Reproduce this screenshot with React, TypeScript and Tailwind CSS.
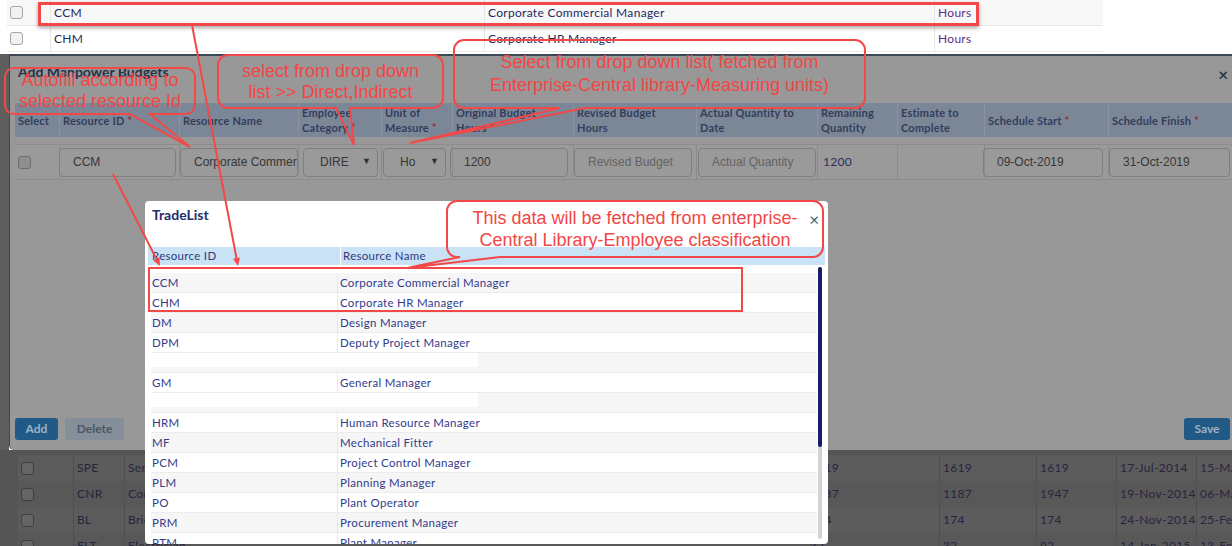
import React from 'react'

const RED = '#f34848'

const tradeRows: ([string, string] | null)[] = [
  ['CCM', 'Corporate Commercial Manager'],
  ['CHM', 'Corporate HR Manager'],
  ['DM', 'Design Manager'],
  ['DPM', 'Deputy Project Manager'],
  null,
  ['GM', 'General Manager'],
  null,
  ['HRM', 'Human Resource Manager'],
  ['MF', 'Mechanical Fitter'],
  ['PCM', 'Project Control Manager'],
  ['PLM', 'Planning Manager'],
  ['PO', 'Plant Operator'],
  ['PRM', 'Procurement Manager'],
  ['PTM', 'Plant Manager'],
]

const pageRows = [
  ['SPE', 'Senior Project Engineer', '1619', '1619', '1619', '17-Jul-2014', '15-Mar-2015'],
  ['CNR', 'Construction Manager', '1187', '1187', '1947', '19-Nov-2014', '06-Mar-2015'],
  ['BL', 'Bricklayer', '174', '174', '174', '24-Nov-2014', '25-Feb-2015'],
  ['ELT', 'Electrician', '32', '32', '92', '14-Jan-2015', '13-Feb-2015'],
]

// callout outline with a tail hanging from the bottom edge
function callout(x: number, y: number, w: number, h: number, r: number, b1: number, b2: number, tx: number, ty: number) {
  const R = x + w
  const B = y + h
  return `M${x + r},${y} H${R - r} A${r},${r} 0 0 1 ${R},${y + r} V${B - r} A${r},${r} 0 0 1 ${R - r},${B} H${b2} L${tx},${ty} L${b1},${B} H${x + r} A${r},${r} 0 0 1 ${x},${B - r} V${y + r} A${r},${r} 0 0 1 ${x + r},${y} Z`
}

function Arrow({ x1, y1, x2, y2 }: { x1: number; y1: number; x2: number; y2: number }) {
  const dx = x2 - x1
  const dy = y2 - y1
  const len = Math.hypot(dx, dy)
  const ux = dx / len
  const uy = dy / len
  const bx = x2 - ux * 8
  const by = y2 - uy * 8
  const pts = `${x2},${y2} ${bx - uy * 3.5},${by + ux * 3.5} ${bx + uy * 3.5},${by - ux * 3.5}`
  return (
    <g>
      <line x1={x1} y1={y1} x2={bx} y2={by} stroke={RED} strokeWidth={2} />
      <polygon points={pts} fill={RED} />
    </g>
  )
}

function Field({ text, w, ml, pl = 13, muted, caret }: { text: string; w: number; ml: number; pl?: number; muted?: boolean; caret?: boolean }) {
  return (
    <div
      className="h-[29px] border border-[#7f7f7f] rounded-[4px] flex items-center overflow-hidden whitespace-nowrap font-['Liberation_Sans',Arial,sans-serif] text-[12px]"
      style={{ width: w, marginLeft: ml, paddingLeft: pl }}
    >
      <span className={muted ? 'text-[#636363]' : 'text-[#363636]'}>{text}</span>
      {caret && <span className="ml-auto mr-[6px] text-[9px] text-[#2f2f2f]">▼</span>}
    </div>
  )
}

export default function App() {
  const heads: React.ReactNode[] = [
    'Select',
    <>Resource ID <span className="text-[#8a3535]">*</span></>,
    'Resource Name',
    <>Employee<br />Category <span className="text-[#8a3535]">*</span></>,
    <>Unit of<br />Measure <span className="text-[#8a3535]">*</span></>,
    <>Original Budget<br />Hours <span className="text-[#8a3535]">*</span></>,
    <>Revised Budget<br />Hours</>,
    <>Actual Quantity to<br />Date</>,
    <>Remaining<br />Quantity</>,
    <>Estimate to<br />Complete</>,
    <>Schedule Start <span className="text-[#8a3535]">*</span></>,
    <>Schedule Finish <span className="text-[#8a3535]">*</span></>,
  ]
  const cols = 'grid-cols-[44px_120px_119px_83px_71px_121px_123px_121px_80px_87px_124px_124px]'

  return (
    <div className="relative w-[1232px] h-[546px] overflow-hidden bg-white font-['Lato','Open_Sans',sans-serif]">
      {/* page rows above the modal */}
      <div className="h-[54px] pl-[7px]">
        {[['CCM', 'Corporate Commercial Manager'], ['CHM', 'Corporate HR Manager']].map(([id, name], i) => (
          <div key={id} className={`w-[1096px] h-[26px] flex items-center border-b border-[#e8e8e8] text-[12px] tracking-[0.3px] ${i === 0 ? 'bg-[#f8f8f8]' : 'bg-white'}`}>
            <div className="w-[44px] h-full flex items-center pl-[3px] border-r border-[#e6e6e6]">
              <div className="w-[13px] h-[13px] rounded-[3px] border border-[#a8a8a8] bg-[#f1f1f1]" />
            </div>
            <div className="w-[433px] pl-[3px] text-[#25285e]">{id}</div>
            <div className="w-[450px] h-full flex items-center pl-[3px] border-l border-[#e6e6e6] text-[#25285e]">{name}</div>
            <div className="flex-1 h-full flex items-center pl-[3px] border-l border-[#e6e6e6] text-[#5e2d86]">Hours</div>
          </div>
        ))}
      </div>

      {/* modal region */}
      <div className="flex h-[396px]">
        <div className="w-[9px] bg-[#5e5e5e]" />
        <div className="flex-1 flex flex-col bg-[#989898] border-t-2 border-l border-[#3b4856] rounded-bl-[5px]">
          <div className="flex items-start justify-between pl-[8px] pr-[4px] mt-[8px] h-[16px]">
            <div className="text-[14px] font-bold leading-[16px] text-[#26334a]">Add Manpower Budgets</div>
            <div className="mt-[4px] text-[17px] leading-[14px] font-bold text-[#2b3a4a]">×</div>
          </div>

          <div className="ml-[5px] mt-[23px]">
            <div className={`grid ${cols} h-[34px] bg-[#7b8797] text-[11px] font-bold leading-[15px] text-[#323d5c] tracking-[0.2px]`}>
              {heads.map((h, i) => (
                <div key={i} className={`flex items-center pl-[3px] whitespace-nowrap ${i > 0 ? 'border-l border-[#8a95a3]' : ''}`}>
                  <div>{h}</div>
                </div>
              ))}
            </div>

            <div className={`grid ${cols} h-[36px] mt-[7px] border-t border-b border-[#8c8c8c] bg-[#9a9a9a]`}>
              <div className="flex items-center pl-[3px]">
                <div className="w-[13px] h-[13px] rounded-[3px] border border-[#6c6c6c] bg-[#8f8f8f]" />
              </div>
              <div className="flex items-center border-l border-[#8c8c8c]"><Field text="CCM" w={117} ml={-1} /></div>
              <div className="flex items-center border-l border-[#8c8c8c]"><Field text="Corporate Commercial Manager" w={118} ml={0} /></div>
              <div className="flex items-center border-l border-[#8c8c8c]"><Field text="DIRE" w={75} ml={4} pl={16} caret /></div>
              <div className="flex items-center border-l border-[#8c8c8c]"><Field text="Ho" w={63} ml={1} pl={16} caret /></div>
              <div className="flex items-center border-l border-[#8c8c8c]"><Field text="1200" w={118} ml={-3} /></div>
              <div className="flex items-center border-l border-[#8c8c8c]"><Field text="Revised Budget" w={118} ml={0} muted /></div>
              <div className="flex items-center border-l border-[#8c8c8c]"><Field text="Actual Quantity" w={118} ml={1} muted /></div>
              <div className="flex items-center border-l border-[#8c8c8c] pl-[5px] text-[12px] text-[#2a3160] tracking-[0.3px]">1200</div>
              <div className="border-l border-[#8c8c8c]" />
              <div className="flex items-center border-l border-[#8c8c8c]"><Field text="09-Oct-2019" w={120} ml={-2} /></div>
              <div className="flex items-center border-l border-[#8c8c8c]"><Field text="31-Oct-2019" w={121} ml={0} /></div>
            </div>
          </div>

          <div className="mt-auto mb-[10px] flex items-center pl-[5px] pr-[2px]">
            <div className="h-[22px] w-[43px] rounded-[3px] bg-[#215a86] flex items-center justify-center text-[12px] font-bold text-[#9eb2c5]">Add</div>
            <div className="ml-[7px] h-[22px] w-[59px] rounded-[3px] bg-[#858f9a] flex items-center justify-center text-[12px] font-bold text-[#4c5663]">Delete</div>
            <div className="ml-auto h-[22px] w-[46px] rounded-[3px] bg-[#215a86] flex items-center justify-center text-[12px] font-bold text-[#9eb2c5]">Save</div>
          </div>
        </div>
      </div>

      {/* page rows below the modal */}
      <div className="h-[96px] bg-[#555555] pt-[5px]">
        {pageRows.map((r, i) => (
          <div key={r[0]} className={`h-[26px] ml-[18px] flex items-center text-[12px] tracking-[0.3px] ${i % 2 === 0 ? 'bg-[#5c5c5c]' : 'bg-[#585858]'}`}>
            <div className="w-[55px] h-full flex items-center pl-[3px]">
              <div className="w-[13px] h-[13px] rounded-[3px] border border-[#3f3f3f] bg-[#656565]" />
            </div>
            <div className="w-[51px] h-full flex items-center pl-[3px] border-l border-[#4f4f4f] text-[#24243e]">{r[0]}</div>
            <div className="w-[682px] h-full flex items-center pl-[3px] border-l border-[#4f4f4f] text-[#2a2440] whitespace-nowrap">{r[1]}</div>
            <div className="w-[133px] h-full flex items-center pl-[4px] text-[#2a2440]">{r[2]}</div>
            <div className="w-[97px] h-full flex items-center pl-[3px] border-l border-[#4f4f4f] text-[#2a2440]">{r[3]}</div>
            <div className="w-[80px] h-full flex items-center pl-[3px] border-l border-[#4f4f4f] text-[#2a2440]">{r[4]}</div>
            <div className="w-[80px] h-full flex items-center pl-[3px] border-l border-[#4f4f4f] text-[#2a2440] whitespace-nowrap">{r[5]}</div>
            <div className="flex-1 h-full flex items-center pl-[3px] border-l border-[#4f4f4f] text-[#2a2440] whitespace-nowrap overflow-hidden">{r[6]}</div>
          </div>
        ))}
      </div>

      {/* TradeList dialog */}
      <div className="absolute left-[145px] top-[201px] w-[683px] h-[343px] bg-white rounded-[4px] overflow-hidden flex flex-col">
        <div className="h-[46px] shrink-0 flex items-start justify-between pl-[7px] pr-[9px] pt-[6px]">
          <div className="text-[14px] font-bold leading-[16px] text-[#242c6b]">TradeList</div>
          <div className="mt-[6px] text-[17px] leading-[14px] text-[#3f6079]">×</div>
        </div>
        <div className="mx-[3px] h-[18px] shrink-0 bg-[#c9e2f6] flex items-center text-[11.5px] text-[#2e3a7e] tracking-[0.3px]">
          <div className="w-[193px] h-full flex items-center pl-[4px] border-r border-white">Resource ID</div>
          <div className="pl-[2px]">Resource Name</div>
        </div>
        <div className="flex flex-1">
          <div className="ml-[6px] w-[666px] pt-[8px]">
            {tradeRows.map((row, i) => (
              <div key={i} className={`h-[20px] flex border-b border-[#ececec] text-[11.5px] text-[#333b8a] tracking-[0.3px] ${i % 2 === 0 ? 'bg-[#f6f6f6]' : 'bg-white'}`}>
                {row ? (
                  <>
                    <div className="w-[187px] flex items-center pl-[1px] border-r border-[#e8e8e8]">{row[0]}</div>
                    <div className="flex items-center pl-[2px]">{row[1]}</div>
                  </>
                ) : (
                  <div className="w-[327px] h-[14px] bg-white" />
                )}
              </div>
            ))}
          </div>
          <div className="ml-[1px] mt-[2px] w-[4px] h-[272px] bg-[#d2d2d2] rounded-[2px]">
            <div className="h-[180px] bg-[#1b1b6e] rounded-[2px]" />
          </div>
        </div>
      </div>

      {/* annotations */}
      <div className="absolute left-[38px] top-[2px] w-[941px] h-[24px] border-[3px] border-[#f34848] shadow-[0_2px_4px_rgba(0,0,0,0.35)]" />
      <div className="absolute left-[148px] top-[267px] w-[595px] h-[45px] border-2 border-[#f34848]" />

      <svg className="absolute left-0 top-0 pointer-events-none" width={1232} height={546}>
        <path d={callout(5, 68, 190, 46, 9, 130, 150, 190, 147)} fill="none" stroke={RED} strokeWidth={2} />
        <path d={callout(218, 55, 225, 53, 10, 336, 350, 354, 145)} fill="none" stroke={RED} strokeWidth={2} />
        <path d={callout(454, 40, 411, 68, 10, 560, 585, 410, 143)} fill="none" stroke={RED} strokeWidth={2} />
        <path d={callout(447, 201, 376, 56, 10, 460, 500, 407, 268)} fill="none" stroke={RED} strokeWidth={2} />
        <Arrow x1={192} y1={25} x2={238} y2={266} />
        <Arrow x1={113} y1={174} x2={160} y2={266} />
      </svg>

      <div className="absolute left-[5px] top-[68px] w-[190px] h-[46px] flex flex-col items-center justify-center text-center font-['Liberation_Sans',Arial,sans-serif] text-[18px] leading-[21px] text-[#f24646]">
        <div>Autofill according to</div>
        <div>selected resource Id</div>
      </div>
      <div className="absolute left-[218px] top-[55px] w-[225px] h-[53px] flex flex-col items-center justify-center text-center font-['Liberation_Sans',Arial,sans-serif] text-[18px] leading-[21px] text-[#f24646]">
        <div>select from drop down</div>
        <div>list &gt;&gt; Direct,Indirect</div>
      </div>
      <div className="absolute left-[454px] top-[40px] w-[411px] h-[68px] flex flex-col items-center justify-center text-center font-['Liberation_Sans',Arial,sans-serif] text-[18px] leading-[23px] text-[#f24646]">
        <div>Select from drop down list( fetched from</div>
        <div>Enterprise-Central library-Measuring units)</div>
      </div>
      <div className="absolute left-[447px] top-[201px] w-[376px] h-[56px] flex flex-col items-center justify-center text-center font-['Liberation_Sans',Arial,sans-serif] text-[18px] leading-[22px] text-[#f24646]">
        <div>This data will be fetched from enterprise-</div>
        <div>Central Library-Employee classification</div>
      </div>
    </div>
  )
}
